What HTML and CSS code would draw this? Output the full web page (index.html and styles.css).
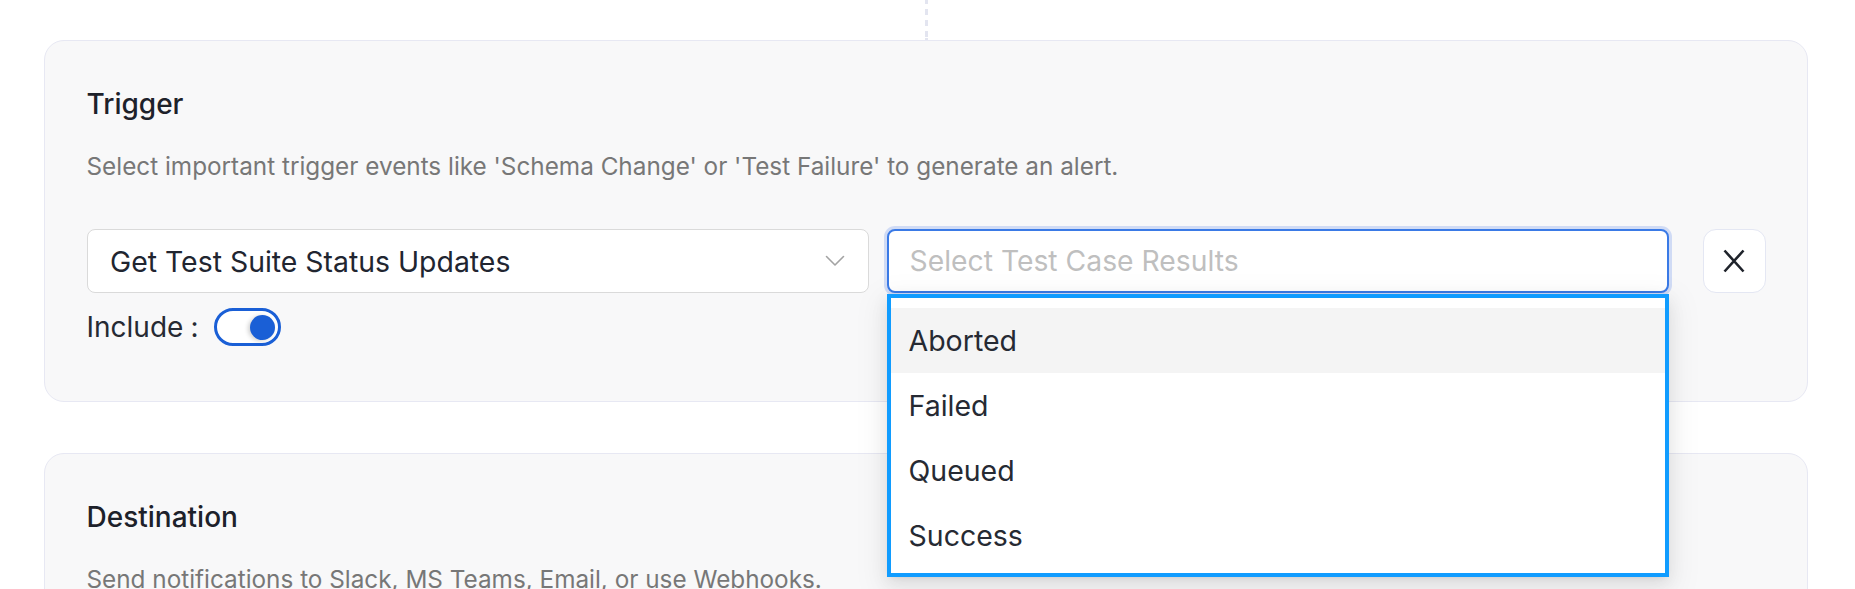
FILE: index.html
```html
<!DOCTYPE html>
<html lang="en">
<head>
<meta charset="utf-8">
<title>Alert trigger</title>
<link rel="stylesheet" href="styles.css">
</head>
<body>
<div class="page">
  <div class="connector"></div>
  <section class="card">
    <h2 class="card-title">Trigger</h2>
    <p class="card-desc">Select important trigger events like 'Schema Change' or 'Test Failure' to generate an alert.</p>
    <div class="trigger-row">
      <div class="fields">
        <div class="select">
          <span class="select-value">Get Test Suite Status Updates</span>
          <svg class="chevron" width="20" height="12" viewBox="0 0 20 12"><polyline points="1.5,1.5 10,10 18.5,1.5" fill="none" stroke="#a3a3a3" stroke-width="1.6" stroke-linecap="round" stroke-linejoin="round"/></svg>
        </div>
        <div class="multi">
          <div class="input">
            <span class="placeholder">Select Test Case Results</span>
          </div>
          <ul class="dropdown">
            <li class="option active">Aborted</li>
            <li class="option">Failed</li>
            <li class="option">Queued</li>
            <li class="option">Success</li>
          </ul>
        </div>
      </div>
      <button class="remove" type="button" aria-label="Remove">
        <svg width="24" height="24" viewBox="0 0 24 24"><path d="M2.5 1.5 L21.5 22.5 M21.5 1.5 L2.5 22.5" stroke="#1f232b" stroke-width="2.6" stroke-linecap="butt" fill="none"/></svg>
      </button>
    </div>
    <div class="include-row">
      <span class="label">Include</span><span class="colon">:</span>
      <span class="switch"><span class="knob"></span></span>
    </div>
  </section>
  <section class="card">
    <h2 class="card-title">Destination</h2>
    <p class="card-desc">Send notifications to Slack, MS Teams, Email, or use Webhooks.</p>
    <div class="trigger-row">
      <div class="fields">
        <div class="select"><span class="select-value">Slack</span></div>
      </div>
    </div>
  </section>
</div>
</body>
</html>
```
FILE: styles.css
```css
* { box-sizing: border-box; }
html, body {
  margin: 0;
  padding: 0;
  background: #ffffff;
  overflow: hidden;
}
body {
  font-family: Inter, "Noto Sans", "Liberation Sans", sans-serif;
  color: #1f232b;
}
.page {
  display: flex;
  flex-direction: column;
  padding: 0 47px 0 44px;
}
.connector {
  align-self: center;
  width: 3px;
  height: 40px;
  background-image: repeating-linear-gradient(to bottom, #e3e5f0 0 6px, transparent 6px 11px);
  background-position: 0 -2px;
}
.card {
  background: #f8f8f9;
  border: 1.5px solid #e7e8f3;
  border-radius: 20px;
  padding: 42px 41.5px 55px;
}
.card + .card {
  margin-top: 51px;
}
.card-title {
  margin: 0;
  font-size: 28px;
  line-height: 42px;
  font-weight: 500;
  color: #1d212a;
}
.card-desc {
  margin: 24px 0 0;
  font-size: 24.3px;
  line-height: 35px;
  color: #777777;
}
.trigger-row {
  display: flex;
  align-items: flex-start;
  margin-top: 45px;
}
.fields {
  flex: 1 1 0;
  min-width: 0;
  display: grid;
  grid-template-columns: minmax(0, 1fr) minmax(0, 1fr);
  column-gap: 18px;
}
.select {
  min-width: 0;
  height: 64px;
  background: #ffffff;
  border: 1.5px solid #dadada;
  border-radius: 8px;
  display: flex;
  align-items: center;
  justify-content: space-between;
  padding: 0 23px 0 22.5px;
  font-size: 28.4px;
  color: #212530;
}
.chevron { flex: none; }
.multi {
  min-width: 0;
  position: relative;
}
.input {
  height: 64px;
  background: #ffffff;
  border: 2px solid #3a7ae6;
  border-radius: 8px;
  box-shadow: 0 0 0 3px rgba(70, 120, 230, 0.22);
  display: flex;
  align-items: center;
  padding: 0 21px;
  font-size: 28.3px;
}
.placeholder {
  color: #bfbfbf;
}
.dropdown {
  position: absolute;
  z-index: 10;
  left: 0;
  right: 0;
  top: calc(100% + 1px);
  margin: 0;
  list-style: none;
  background: #ffffff;
  border: 4px solid #109cff;
  padding: 10px 0 5px;
  box-shadow: 0 6px 16px rgba(0, 0, 0, 0.08), 0 3px 6px -4px rgba(0, 0, 0, 0.12), 0 9px 28px 8px rgba(0, 0, 0, 0.05);
}
.option {
  height: 65px;
  display: flex;
  align-items: center;
  padding: 0 18px;
  font-size: 28.5px;
  color: #262a33;
}
.option.active {
  background: #f4f4f4;
}
.remove {
  flex: none;
  margin-left: 34px;
  width: 63px;
  height: 64px;
  background: #ffffff;
  border: 1.5px solid #e4e7f3;
  border-radius: 13px;
  display: flex;
  align-items: center;
  justify-content: center;
  padding: 0;
  cursor: pointer;
}
.include-row {
  display: flex;
  align-items: center;
  margin-top: 15px;
  height: 38px;
  font-size: 28px;
  color: #262a33;
}
.colon {
  margin-left: 7px;
}
.switch {
  margin-left: 16px;
  width: 67px;
  height: 38px;
  border: 3px solid #1a5fd6;
  border-radius: 19px;
  background: #ffffff;
  display: flex;
  align-items: center;
  justify-content: flex-end;
  padding-right: 3.5px;
}
.knob {
  width: 25px;
  height: 25px;
  border-radius: 50%;
  background: #1a5fd6;
  box-shadow: -2px 1px 4px rgba(0, 0, 0, 0.18);
}
```
